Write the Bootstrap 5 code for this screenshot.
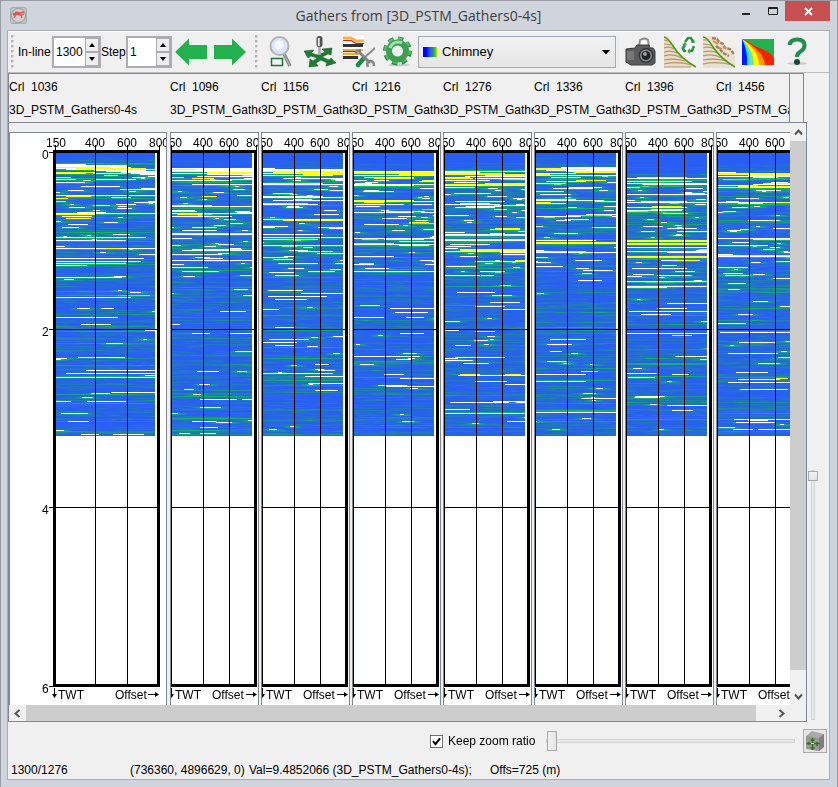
<!DOCTYPE html>
<html lang="en">
<head>
<meta charset="utf-8">
<meta name="viewport" content="width=device-width, initial-scale=1">
<title>Gathers from [3D_PSTM_Gathers0-4s]</title>
<link rel="stylesheet" href="https://cdn.jsdelivr.net/npm/bootstrap@5.3.0/dist/css/bootstrap.min.css">
<style>
body{font:12px/16px "Liberation Sans",Arial,sans-serif;color:#000;background:#d0d5dd}
.win{min-height:100vh;border:1px solid #9a9da4;padding:0 7px 7px 6px}
.titlebar{height:29px;display:grid;grid-template-columns:94px 1fr 94px}
.titlebar h1{font:14px/30px "Open Sans",sans-serif;color:#3d3d3d;margin:0}
.appicon{margin:6px 0 0 3px}
.winbtn{border:0;background:none;padding:0;height:20px;width:26px}
.winbtn.close-win{width:45px;background:#c75050}
.client{border:1px solid #a8adb6;background:#f0f0f0}
.tools{height:42px;border-top:1px solid #fff;border-bottom:1px solid #bbb}
.toolgroup{padding-left:3px}
.grip{width:3px;height:34px;margin-right:4px;background:radial-gradient(circle at 1px 1px,#b4b4b4 1px,transparent 2px) 0 0/3px 5px}
.tools svg{display:block}
.iconbtn{border:0;background:none;padding:0;width:32px;height:32px;flex:none}
.arrows{gap:7px;padding:0 5px 0 3px}
.icons{gap:7px;padding:0 4px 0 3px}
.icons.last{margin-left:2px;padding:0 0 0 6px}
.lab{width:34px}
.lab.step{width:25px}
.spin{border:2px solid #abadb3;background:#fff;height:32px;width:49px}
.spin.narrow{width:46px}
.spin input{border:0;outline:0;padding:0 0 0 2px;width:31px;min-width:0;flex:1;background:#fff}
.spin .steps{width:14px}
.spin button{border:1px solid #acacac;background:#eee;padding:0;width:14px;height:14px;display:flex;align-items:center;justify-content:center}
.combo{height:32px;width:198px;border:1px solid #a3a9b2;background:linear-gradient(#f2f2f2,#e5e5e5);padding:0 5px 0 4px}
.swatch{width:16px;height:10px;flex:none;background:linear-gradient(90deg,#00f 20%,#1d55d8 40%,#3080a8 60%,#2cdc30 78%,#ff0 90%,#fff)}
.combo select{appearance:none;border:0;background:none;outline:0;padding:0 3px;width:100%;height:30px;font-size:13px}
.heads{height:49px;border:1px solid #828790;border-bottom:0;margin-right:3px}
.headview{border-right:1px solid #828790;overflow:hidden;margin-right:13px}
.head{flex:none;width:91px;overflow:hidden;white-space:pre;line-height:23px;padding-top:2px}
.head.first{width:161px}
.scroller{border:1px solid #828790;display:grid;grid-template-columns:1fr 16px;grid-template-rows:582px 16px}
.view{overflow:hidden;padding-top:9px;background:#f0f0f0}
.gather{flex:none;height:573px;width:89px;margin-right:2px;border:1px solid #828790;border-bottom:0;background:#fff;display:grid;overflow:hidden}
.gather.first{width:158px;margin-right:3px}
.gather canvas,.gather svg{grid-area:1/1;display:block}
.gather canvas{margin:20px 0 0 1px}
.gather.first canvas{margin-left:46px}
.gather text{font:12px "Liberation Sans",Arial,sans-serif}
.bar{background:#f0f0f0}
.bar button{border:0;background:none;padding:0;width:17px;height:18px;display:flex;align-items:center;justify-content:center;flex:none}
.bar.v button{width:16px}
.bar.h button{height:16px}
.thumb{background:#cdcdcd;flex:none}
.bar.v .thumb{height:529px}
.bar.h .thumb{width:calc(100% - 34px)}
.side{width:22px;padding:0 0 2px 1px}
.vwrap{width:10px;height:250px}
.rng{appearance:none;background:none;display:block;margin:0;height:20px}
.rng::-webkit-slider-runnable-track{height:4px;border:1px solid #d2d2d2;background:#e8eaea}
.rng::-webkit-slider-thumb{appearance:none;width:10px;height:20px;margin-top:-9px;border:1px solid #a8a8a8;background:linear-gradient(90deg,#f2f2f2,#e4e4e4);border-radius:0}
.rng.vert{width:250px;height:10px;transform-origin:0 0;transform:rotate(90deg) translateY(-10px)}
.rng.vert::-webkit-slider-thumb{height:10px;margin-top:-4px}
.zoomrow{height:38px;padding:0 2px 0 422px}
.keep{width:90px}
.tick{appearance:none;width:13px;height:13px;border:1px solid #707070;background:#fff;margin:0 5px 0 0;flex:none}
.tick:checked{background:#fff url("data:image/svg+xml,%3Csvg xmlns='http://www.w3.org/2000/svg' viewBox='0 0 11 11'%3E%3Cpath d='M2 5.2l2.5 3L9 2.4' fill='none' stroke='%23000' stroke-width='2'/%3E%3C/svg%3E")}
.cube{width:24px;height:24px;border:1px solid #acacac;background:#e6e6e6;padding:0;flex:none}
.status{height:19px;white-space:pre;padding-left:3px}
.status span{flex:none}
.pos,.coord{width:119px}
.val{width:241px}
</style>
<script src="https://cdn.jsdelivr.net/npm/bootstrap@5.3.0/dist/js/bootstrap.bundle.min.js"></script>
</head>
<body>
<div class="win d-flex flex-column">
  <header class="titlebar">
    <svg class="appicon" width="17" height="17" viewBox="0 0 17 17"><rect x=".5" y=".5" width="16" height="16" rx="2" fill="#c2c2c2" stroke="#aaa"/><circle cx="8.5" cy="8.5" r="7" fill="#d0d0d0" stroke="#999"/><path d="M3 6q2 2 3-1l4 1 4-1M3 8l4-1 4 1 3-1M6 8l-2 3M11 8l1 3" fill="none" stroke="#d8534d" stroke-width="1.3"/></svg>
    <h1 class="text-center text-nowrap">Gathers from [3D_PSTM_Gathers0-4s]</h1>
    <div class="d-flex justify-content-end">
      <button class="winbtn" aria-label="Minimize"><svg class="d-block" width="26" height="20"><path d="M9 13h8" stroke="#222" stroke-width="2"/></svg></button>
      <button class="winbtn" aria-label="Maximize"><svg class="d-block" width="26" height="20"><path d="M9.500 6.500h9v7h-9zM9 7.500h10" fill="none" stroke="#222"/></svg></button>
      <button class="winbtn close-win" aria-label="Close"><svg class="d-block" width="45" height="20"><path d="M20 7l7 7M27 7l-7 7" stroke="#fff" stroke-width="1.800"/></svg></button>
    </div>
  </header>

  <main class="client flex-grow-1">
    <div class="tools d-flex">
      <div class="toolgroup d-flex align-items-center border-end border-secondary-subtle">
        <span class="grip"></span>
        <label for="inl" class="lab">In-line</label>
        <div class="spin d-flex"><input id="inl" value="1300"><div class="steps"><button aria-label="Next in-line"><svg width="6" height="4"><path d="M3 0l3 4H0z"/></svg></button><button aria-label="Previous in-line"><svg width="6" height="4"><path d="M0 0h6L3 4z"/></svg></button></div></div>
        <label for="stp" class="lab step">Step</label>
        <div class="spin narrow d-flex"><input id="stp" value="1"><div class="steps"><button aria-label="Larger step"><svg width="6" height="4"><path d="M3 0l3 4H0z"/></svg></button><button aria-label="Smaller step"><svg width="6" height="4"><path d="M0 0h6L3 4z"/></svg></button></div></div>
        <div class="arrows d-flex">
          <button class="iconbtn" aria-label="Back"><svg width="32" height="32"><path d="M0 16L14 2.500V9h18v14H14v6.500z" fill="#22b14c"/></svg></button>
          <button class="iconbtn" aria-label="Forward"><svg width="32" height="32"><path d="M32 16L18 2.500V9H0v14h18v6.500z" fill="#22b14c"/></svg></button>
        </div>
      </div>
      <div class="toolgroup d-flex align-items-center">
        <span class="grip"></span>
        <div class="icons d-flex">
          <button class="iconbtn" aria-label="Zoom"><svg width="32" height="32" viewBox="0 0 32 32"><path d="M19 18l6 12" stroke="#888" stroke-width="3.500"/><path d="M19 18l6 12" stroke="#bbb" stroke-width="1"/><circle cx="14.500" cy="10" r="9" fill="#dbe5fa" stroke="#b3b3b3" stroke-width="2"/><circle cx="14" cy="9" r="4.500" fill="#f5f9ff"/><path d="M6.500 22.500h11v7h-11z" fill="#f4f4f4" stroke="#20703a" stroke-width="1.500"/></svg></button>
          <button class="iconbtn" aria-label="Positions"><svg width="32" height="32" viewBox="0 0 32 32"><path d="M0 15l10-1-3 3 7 2 7-3-3-3 10-1-1 7-3-1-6 3 7 3 2-2 5 5-10 3 1-3-6-3-5 3 2 3-9 1 1-8 3 2 4-3-6-2-3 2z" fill="#1f7d33" stroke="#135321" stroke-width=".5"/><path d="M15.500 9v10" stroke="#aaa" stroke-width="2.500"/><rect x="12.500" y="0" width="6" height="11" rx="2.500" fill="#555"/><path d="M14.800 2v8" stroke="#eee" stroke-width="1.800"/></svg></button>
          <button class="iconbtn" aria-label="Display parameters"><svg width="32" height="32" viewBox="0 0 32 32"><path d="M0 0h21v22H0z" fill="#fff"/><path d="M0 2h8l5 3h8" fill="none" stroke="#f2b545" stroke-width="3"/><path d="M0 4.500h8l5 3h8" fill="none" stroke="#c22" stroke-width="1.200"/><path d="M0 9.500h20M0 21.500h15" stroke="#333" stroke-width="3"/><path d="M0 14h20M0 18h16" stroke="#f4b02c" stroke-width="2"/><path d="M0 15.500h18" stroke="#b22" stroke-width="1.200"/><path d="M15 29l6-7" stroke="#18894b" stroke-width="4.500" stroke-linecap="round"/><path d="M20 23L32 12" stroke="#888" stroke-width="1.800"/><path d="M16 16l11 11" stroke="#858585" stroke-width="3"/><path d="M13 18l1-3 4-1M25 31q-2-6 2-6 4 0 4 5" fill="none" stroke="#858585" stroke-width="2.500"/></svg></button>
          <button class="iconbtn" aria-label="Settings"><svg width="32" height="32" viewBox="0 0 32 32"><ellipse cx="17" cy="29" rx="11" ry="1.500" fill="#ccc"/><circle cx="15.500" cy="15" r="12" fill="none" stroke="#2c8541" stroke-width="5" stroke-dasharray="5.200 4.225"/><circle cx="15.500" cy="14.500" r="12" fill="none" stroke="#5bbb6d" stroke-width="3" stroke-dasharray="4.400 5.025"/><circle cx="15.500" cy="15" r="8.500" fill="none" stroke="#3d9f52" stroke-width="6"/><path d="M8 12a8.500 8.500 0 0 1 12-5" fill="none" stroke="#9be0a6" stroke-width="3"/></svg></button>
        </div>
        <div class="combo d-flex align-items-center"><span class="swatch"></span><select aria-label="Colour table"><option>Chimney</option></select><svg width="8" height="5" class="flex-shrink-0"><path d="M0 0h8L4 4.500z"/></svg></div>
        <div class="icons last d-flex align-items-center border-start border-secondary-subtle">
          <button class="iconbtn" aria-label="Snapshot"><svg width="32" height="32" viewBox="0 0 32 32"><path d="M14 10l1-6q5-3 8 0l1 6" fill="#eee" stroke="#888" stroke-width="1.800"/><rect x="16" y="5" width="6" height="4" fill="#fff"/><path d="M1 13l9-1 2-3h12l1 3h3l2 3v12l-3 2H6l-5-3z" fill="#5c5c5c" stroke="#3a3a3a"/><path d="M2 15h7v9H2z" fill="#777"/><circle cx="21" cy="19.500" r="7.500" fill="#333"/><circle cx="21" cy="19.500" r="6" fill="#909090"/><circle cx="21" cy="19.500" r="4.500" fill="#222"/><circle cx="20" cy="18" r="2" fill="#92a0ad"/></svg></button>
          <button class="iconbtn" aria-label="Edit mute"><svg width="32" height="32" viewBox="0 0 32 32"><path d="M0 0h4l12 19 16 12H0z" fill="#e9dcca"/><path d="M18 0h14v18H18z" fill="#fff"/><path d="M0 4l4 1M0 8l7 1M0 12q6-2 10 1M0 16q7-2 13 1M0 20q9-3 18 2M0 24q10-2 21 1M0 28q13-3 28 1M0 31h27" fill="none" stroke="#b8946c" stroke-width="1.200"/><path d="M0 1q4 1 9 9 8 13 23 21" fill="none" stroke="#4e9a12" stroke-width="1.600"/><path d="M21 6l3-4h3l2 4M30 10l-2 5h-3M22 15h-2l-1-3 2-3" fill="none" stroke="#2c9142" stroke-width="2.600"/><path d="M27 7h4l-1-4zM26 12v6l-3-3zM18 9h5l-2-3z" fill="#36a94d"/></svg></button>
          <button class="iconbtn" aria-label="Mute"><svg width="32" height="32" viewBox="0 0 32 32"><path d="M0 0h32v32H0z" fill="#f3f0ea"/><path d="M0 0h14l5 8 7 4 6 8v12H0z" fill="#e9e0d3"/><path d="M0 4h5M0 8l8 1M0 12q7-2 11 1M0 16q8-2 15 1M0 20q9-3 19 2M0 24q12-2 24 1M0 28q13-3 30 1" fill="none" stroke="#b8946c" stroke-width="1.200"/><path d="M9 2l5 1 2 3 4 2 2 4 5 1 4 5M13 10l4 3 3 4 6 3" fill="none" stroke="#a48158" stroke-width="2.400" stroke-dasharray="4 1"/><path d="M10 5l5 3M20 11l3 1M16 12l3 1" stroke="#d88c3d" stroke-width="2"/><path d="M0 1q4 0 10 10 8 12 22 20" fill="none" stroke="#4e9a12" stroke-width="1.600"/></svg></button>
          <button class="iconbtn" aria-label="Velocity fan"><svg width="32" height="32" viewBox="0 0 32 32"><path d="M0 3h32v26H0z" fill="#22b14c"/><path d="M0 3q6 2 13 7 19 7 19 14v5H0z" fill="#f22400"/><path d="M0 3q22 12 23 26H0z" fill="#ff9800"/><path d="M0 3q17 12 17 26H0z" fill="#ff0"/><path d="M0 3q12 12 12 26H0z" fill="#6fe39a"/><path d="M0 3q9 12 8 26H0z" fill="#1de0ff"/><path d="M0 3q6 12 5 26H0z" fill="#0018ff"/></svg></button>
          <button class="iconbtn" aria-label="Help"><svg width="32" height="32" viewBox="0 0 32 32"><ellipse cx="16" cy="27.500" rx="10" ry="1.500" fill="#ccc"/><path d="M8.500 9q1-5.500 7.500-5.500 7.500 0 7.500 6 0 3.500-4 6-3.500 2-3.500 5.500" fill="none" stroke="#1f8f4d" stroke-width="4"/><circle cx="16" cy="26" r="3" fill="#164a2b"/></svg></button>
        </div>
      </div>
    </div>

    <div class="d-flex">
      <div class="flex-grow-1 overflow-hidden">
        <div class="heads"><div class="headview d-flex h-100" id="heads"></div></div>
        <div class="scroller">
          <div class="view d-flex" id="view"></div>
          <div class="bar v d-flex flex-column justify-content-between">
            <div><button aria-label="Scroll up"><svg width="9" height="7"><path d="M1 5.500l3.500-4 3.500 4" fill="none" stroke="#555" stroke-width="2"/></svg></button><div class="thumb"></div></div>
            <button aria-label="Scroll down"><svg width="9" height="7"><path d="M1 1.500l3.500 4 3.500-4" fill="none" stroke="#555" stroke-width="2"/></svg></button>
          </div>
          <div class="bar h d-flex justify-content-between">
            <div class="d-flex flex-grow-1"><button aria-label="Scroll left"><svg width="7" height="9"><path d="M5.500 1l-4 3.500 4 3.500" fill="none" stroke="#555" stroke-width="2"/></svg></button><div class="thumb"></div></div>
            <button aria-label="Scroll right"><svg width="7" height="9"><path d="M1.500 1l4 3.500-4 3.500" fill="none" stroke="#555" stroke-width="2"/></svg></button>
          </div>
        </div>
      </div>
      <div class="side d-flex align-items-end flex-shrink-0"><div class="vwrap"><input type="range" class="rng vert" aria-label="Vertical zoom" min="0" max="100" value="0"></div></div>
    </div>

    <div class="zoomrow d-flex align-items-center">
      <input type="checkbox" class="tick" id="keep" checked><label for="keep" class="keep text-nowrap">Keep zoom ratio</label>
      <input type="range" class="rng flex-grow-1 mx-2" aria-label="Horizontal zoom" min="0" max="100" value="0">
      <button class="cube" aria-label="Home zoom"><svg class="d-block" width="22" height="22" viewBox="0 0 22 22"><path d="M2 6l6-5 12 3v13l-5 4L2 18z" fill="#aaa"/><path d="M2 6l13 2v13L2 19z" fill="#989898"/><path d="M15 8l5-4v13l-5 4z" fill="#7e7e7e"/><path d="M8.500 8v12M2.500 13.500h13M6.500 10h4M6.500 18h4M4.500 12v3M13 12v4" stroke="#3b6b22" stroke-width="1.500"/><path d="M7 13.500h3" stroke="#ddd"/></svg></button>
    </div>
    <footer class="status d-flex align-items-center"><span class="pos">1300/1276</span><span class="coord">(736360, 4896629, 0)</span><span class="val">Val=9.4852066 (3D_PSTM_Gathers0-4s);</span><span>Offs=725 (m)</span></footer>
  </main>
</div>

<script>
// Picked events per gather: "row start end colour" (w white, y yellow, g green)
const EVENTS = [
"10 0 50 g,11 0 30 w,12 0 72 w,13 0 72 w,14 0 55 y,14 55 75 w,15 0 20 w,15 20 90 y,16 10 55 w,16 55 99 y,17 38 90 w,18 50 99 w,19 0 40 y,19 65 99 w,20 0 30 w,20 75 99 w,21 84 99 w,22 48 62 y,24 0 15 y,25 10 50 g,26 0 20 w,26 40 80 w,29 0 25 w,33 25 40 w,42 0 72 w,43 10 35 y,44 55 75 y,45 0 12 y,48 0 10 y,51 60 80 w,60 0 99 w,61 0 40 y,63 20 36 w,65 10 35 y,68 0 5 w,71 12 32 w,79 0 99 g,84 0 90 w,87 0 70 w,88 0 99 g,95 0 99 w,95 50 65 y,105 0 88 w,108 0 85 w,110 0 70 w,124 0 66 w,126 8 18 w,138 0 99 g,142 0 99 g,144 0 75 w,155 45 58 w,164 0 62 w,171 25 55 w,176 0 99 w,178 0 99 g,204 22 67 w,217 30 99 w,220 10 99 w,223 0 99 g,224 0 99 w,239 55 99 w,240 35 54 w,241 0 99 g,248 0 15 w,248 31 70 w,250 0 99 g,268 12 33 w,281 25 43 w,281 57 88 w",
"15 0 80 w,16 0 25 y,16 25 80 w,17 0 80 w,18 0 30 y,18 30 80 w,19 35 80 y,20 0 45 w,20 45 80 y,21 35 80 w,23 25 80 w,24 0 12 y,25 20 42 y,26 58 80 y,27 0 60 w,29 0 80 g,31 20 80 w,32 0 80 g,43 30 45 y,52 0 40 y,53 0 80 w,55 0 70 g,58 0 25 y,60 0 80 w,61 5 30 y,63 0 60 w,74 20 45 w,77 10 45 w,80 0 80 y,81 0 80 w,85 0 20 w,91 47 62 w,96 20 70 y,97 10 80 w,101 0 50 w,107 0 80 w,111 0 12 w,114 0 36 w,158 48 74 w,171 0 8 w,180 20 38 w,180 58 80 w,218 25 47 w,236 12 22 w,243 0 80 g,246 28 65 w,246 70 80 w,265 0 80 g,268 20 45 w,274 28 46 w,277 0 50 g,280 7 18 w,280 28 44 w",
"15 0 12 w,16 0 80 w,17 0 80 w,18 0 80 y,19 10 80 y,20 0 60 w,20 60 80 y,21 40 80 y,22 0 70 w,25 20 80 w,26 70 80 w,27 72 80 w,29 0 80 g,30 0 60 y,31 0 80 w,32 0 80 g,40 10 30 w,43 0 60 w,44 0 80 w,47 10 80 w,50 0 45 y,51 0 55 w,52 0 80 g,66 0 80 w,67 20 80 y,74 0 12 w,81 0 60 w,84 0 80 w,86 0 55 y,92 0 80 w,98 0 80 g,98 35 70 y,104 0 25 w,106 10 30 w,110 15 55 w,118 45 72 w,137 5 40 w,140 38 80 w,143 5 64 w,146 12 44 w,156 0 16 w,174 12 32 w,177 0 80 g,186 6 46 w,189 0 34 w,192 12 32 w,193 44 55 w,194 0 80 g,205 0 80 g,211 52 66 w,217 55 72 w,220 0 70 w,223 42 80 w,227 0 80 g,230 45 80 w,237 52 75 w",
"18 0 80 w,19 0 80 y,20 0 80 y,21 45 80 y,22 0 25 y,22 25 80 w,24 10 60 w,25 20 60 y,27 20 35 w,27 68 80 y,28 65 80 w,31 0 80 w,32 0 60 w,33 0 80 g,47 0 60 y,48 0 80 w,49 10 30 y,51 0 50 w,56 0 80 g,58 30 60 y,59 0 60 w,69 55 75 y,71 10 45 w,85 0 80 w,86 30 70 y,88 45 80 w,90 0 40 y,91 0 80 w,92 45 75 w,103 0 40 w,104 0 80 g,110 5 20 y,111 0 20 w,116 0 80 g,118 0 80 w,155 36 80 w,164 0 30 w,164 52 70 w,180 46 70 w,203 0 66 w,206 42 58 w,208 10 46 g,211 12 20 w,221 30 50 w,224 0 80 g,225 46 80 w,233 32 80 w",
"17 0 80 g,18 0 80 w,19 0 35 w,20 0 60 y,21 0 80 y,22 40 80 y,23 20 80 w,24 0 25 y,25 0 28 y,25 30 80 w,27 0 45 w,30 40 80 y,31 0 80 y,32 0 80 w,34 0 30 w,48 10 60 w,50 15 45 y,51 0 55 w,54 10 50 w,75 50 75 y,76 45 75 w,79 0 20 w,80 45 60 y,81 0 80 w,82 0 80 y,84 0 80 g,86 0 80 y,87 0 80 w,89 0 60 g,91 5 45 w,96 15 80 y,97 15 80 y,98 0 80 w,99 55 80 w,107 70 80 y,108 30 80 w,115 0 80 g,118 35 60 w,122 0 35 w,133 0 80 g,139 12 50 w,149 45 75 w,152 0 80 g,153 30 60 w,156 58 80 w,176 0 80 g,177 0 14 w,178 30 50 y,192 10 26 w,204 10 60 w,210 18 44 w,221 15 35 y,221 60 76 y,222 13 80 w,228 30 62 w,231 60 80 w,248 48 80 w,249 5 64 w,250 50 80 g,256 0 25 w,259 0 80 g,260 0 80 w,268 62 80 w",
"14 25 80 w,15 0 25 y,15 25 80 w,16 0 50 y,16 50 80 w,17 10 80 w,18 30 80 y,19 40 80 y,20 0 40 w,21 0 14 y,22 0 80 w,24 15 45 w,26 0 80 g,27 40 70 y,28 10 50 w,30 0 30 w,38 0 28 w,46 0 40 y,47 0 65 w,49 0 15 y,50 0 30 w,55 0 80 g,61 50 70 w,62 30 45 y,63 0 45 w,67 20 35 w,86 0 80 g,87 0 60 w,89 0 80 y,90 0 80 w,98 0 50 y,99 0 80 w,113 0 27 w,127 42 66 w,174 0 80 g,186 14 50 w,198 14 26 w,218 45 62 y,221 0 50 w,227 0 80 g,228 0 50 w,245 45 80 w,257 0 80 g,258 0 80 g,259 0 80 w",
"24 10 60 y,25 0 80 w,27 0 80 g,28 0 65 w,30 0 80 w,31 15 80 w,33 0 80 g,41 0 80 w,48 25 60 y,49 0 80 w,53 25 55 y,54 0 60 w,56 25 50 y,57 0 55 w,59 0 80 g,75 40 70 w,78 50 80 w,87 0 80 y,88 0 80 w,90 0 80 y,91 0 80 y,94 0 80 w,96 0 80 g,98 0 80 w,99 40 80 w,103 0 80 y,104 0 80 y,106 0 80 g,107 50 70 y,112 35 50 w,115 5 60 w,122 30 65 w,128 0 80 w,129 0 80 g,132 0 80 g,133 0 80 w,134 0 40 y,150 40 80 w,155 30 60 w,158 2 80 w,161 14 44 w,162 0 80 g,176 0 70 w,180 0 80 w,182 45 65 y,203 48 80 w,210 0 80 g,211 0 80 g,220 0 30 w,221 45 62 w,223 0 80 g,243 8 38 w,252 40 80 w,257 45 66 w,266 0 80 g",
"19 0 18 w,20 0 75 y,21 0 80 y,22 30 80 y,23 0 80 w,24 35 60 w,26 0 80 g,30 45 80 y,31 35 80 w,33 20 80 y,34 0 80 w,49 0 75 w,50 20 45 y,49 60 72 y,51 0 80 g,67 30 62 w,75 55 80 w,85 0 72 w,86 35 80 y,92 0 50 w,102 0 80 y,103 0 80 w,104 0 80 g,114 0 30 w,120 5 25 w,136 10 22 w,178 0 80 g,179 2 75 w,200 10 60 w,219 18 50 w,224 0 80 g,225 58 70 y,226 20 62 w,229 10 72 w,236 22 70 w,260 10 80 g,266 16 80 w,267 30 50 w,276 15 35 w,276 40 72 w"
];
const TOP = [10, 14, 14, 15, 15, 11, 20, 15];
const COL = {w:[255,255,255], y:[255,255,0], g:[8,215,45]};

function rng(seed){ return () => { seed |= 0; seed = seed + 0x6D2B79F5 | 0; let t = Math.imul(seed ^ seed >>> 15, 1 | seed); t = t + Math.imul(t ^ t >>> 7, 61 | t) ^ t; return ((t ^ t >>> 14) >>> 0) / 4294967296; }; }
function tint(v){
  const stops = [[0,40,88,255],[.4,40,98,236],[.62,34,122,190],[.82,28,150,130],[1,8,200,60]];
  v = Math.max(0, Math.min(.999, v));
  let i = 1; while (stops[i][0] < v) i++;
  const a = stops[i-1], b = stops[i], f = (v - a[0]) / (b[0] - a[0]);
  return [1,2,3].map(k => a[k] + (b[k] - a[k]) * f);
}
function paint(cv, n){
  const W = cv.width, H = cv.height, ctx = cv.getContext('2d'), im = ctx.createImageData(W, H), r = rng(71 + n * 13);
  const put = (x, y, c, a) => {
    if (x < 0 || x >= W || y < 0 || y >= H) return;
    const o = (y * W + x) * 4;
    for (let k = 0; k < 3; k++) im.data[o+k] = im.data[o+k] * (1 - a) + c[k] * a;
    im.data[o+3] = 255;
  };
  for (let y = 0; y < H; y++){
    const base = r(), quiet = y < TOP[n] - 6, strong = r() < .13;
    let a = r(), b = r(), step = 8 + Math.floor(r() * 10), k = 0;
    for (let x = 0; x < W; x++, k++){
      if (k >= step){ k = 0; a = b; b = r(); step = 6 + Math.floor(r() * 14); }
      const s = a + (b - a) * k / step;
      let v = .08 + s * .4 + base * .28 + (strong ? .24 : 0);
      if (quiet) v = .22 + s * .04; else if (y < TOP[n]) v *= .85;
      put(x, y, tint(v), 1);
    }
  }
  // Green fades out towards both ends; white and yellow are clipped hard.
  const seg = (y, x0, x1, c, gain) => {
    for (let x = x0; x < x1; x++) put(x, y, COL[c], c === 'g' ? gain * Math.sin(Math.PI * (x - x0 + 1) / (x1 - x0 + 1)) : 1);
  };
  for (let y = TOP[n] + 8; y < H; y++){
    const p = y < 65 ? .5 : y < 125 ? .28 : .11;
    if (r() < p){
      const x0 = Math.floor(r() * W * 1.1 - 8), len = 4 + Math.floor(r() * r() * W * .5);
      if (y < H - 3){
        seg(y + 1, x0 - 8, x0 + len + 10, 'g', .55);
        seg(y, x0 - 8, x0 + len + 8, 'g', .7);
        seg(y, x0, x0 + len, 'w');
      }
    }
  }
  const ev = EVENTS[n].split(',').map(e => { const q = e.split(' '); return [+q[0], +q[1], +q[2], q[3]]; });
  ev.forEach(e => { if (e[3] !== 'g' && e[0] < 135) seg(e[0] + 1, e[1] - 12, e[2] + 12, 'g', .6); });
  ev.forEach(e => e[3] === 'g' ? seg(e[0], e[1] - 20, e[2] + 20, 'g', .75) : seg(e[0], e[1], e[2], e[3]));
  ctx.putImageData(im, 0, 0);
}

const heads = document.getElementById('heads'), view = document.getElementById('view');
for (let n = 0; n < 8; n++){
  const first = n === 0;
  heads.insertAdjacentHTML('beforeend', `<div class="head${first ? ' first' : ''}">Crl  ${1036 + n * 60}\n3D_PSTM_Gathers0-4s</div>`);
  const g = first ? {w:156, l:43, lw:3, ax:[46,85,117,149], r:147, tx:48, ox:105, ax2:138, dx:44}
                  : {w:87, l:0, lw:1, ax:[1,32,58,85], r:83, tx:4, ox:41, ax2:75, dx:0};
  const top = g.l, end = g.r + 3;
  let s = `<svg width="${g.w}" height="572">`;
  [150,400,600,800].forEach((t, i) => s += `<text x="${g.ax[i]}" y="14" text-anchor="middle">${t}</text><rect x="${g.ax[i] - (i ? 0 : 1)}" y="12" width="1" height="6"/>`);
  s += `<rect x="${top}" y="17" width="${end - top}" height="3"/><rect x="${top}" y="551" width="${end - top}" height="3"/>`;
  s += `<rect x="${g.l}" y="17" width="${g.lw}" height="537"/><rect x="${g.r}" y="17" width="3" height="537"/>`;
  s += `<rect x="${g.ax[1]}" y="18" width="1" height="535"/><rect x="${g.ax[2]}" y="18" width="1" height="535"/>`;
  s += `<rect x="${top}" y="196" width="${end - top}" height="1"/><rect x="${top}" y="374" width="${end - top}" height="1"/>`;
  if (first) [0,2,4,6].forEach((t, i) => { const y = [19,196,374,553][i]; s += `<text x="32" y="${y + 7}">${t}</text><rect x="39" y="${y}" width="5" height="1"/>`; });
  s += `<text x="${g.tx}" y="566">TWT</text><text x="${g.ox}" y="566">Offset</text>`;
  s += `<path d="M${g.dx}.500 555v7M${g.ax2} 561.500h8" stroke="#000"/><path d="M${g.dx - 2} 561h5l-2.500 4zM${g.ax2 + 7} 559v5l4-2.500z"/></svg>`;
  const d = document.createElement('div');
  d.className = 'gather' + (first ? ' first' : '');
  d.innerHTML = `<canvas width="${first ? 99 : 80}" height="283"></canvas>` + s;
  view.appendChild(d);
  paint(d.firstChild, n);
}
</script>
</body>
</html>
